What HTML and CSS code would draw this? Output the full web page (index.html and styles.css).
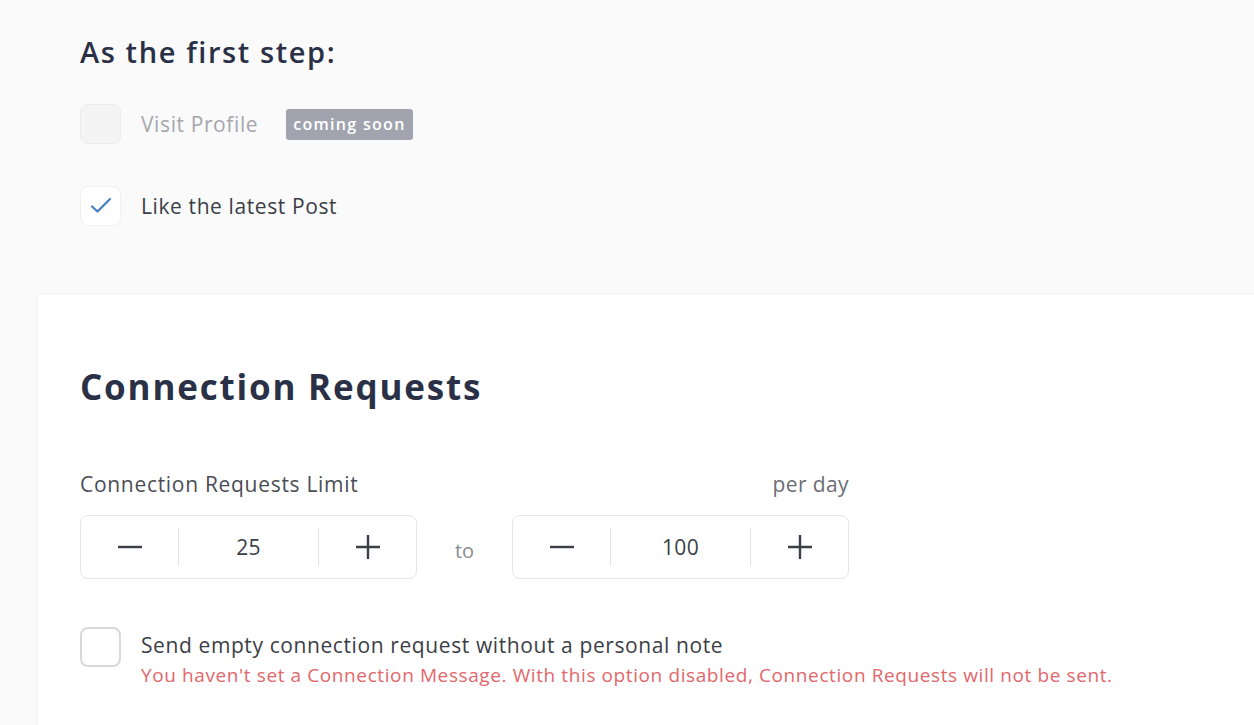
FILE: index.html
```html
<!DOCTYPE html>
<html lang="en">
<head>
    <meta charset="UTF-8">
    <meta name="viewport" content="width=device-width, initial-scale=1.0">
    <title>Campaign Steps</title>
    <link rel="stylesheet" href="styles.css">
</head>
<body>
    <div class="first-step">
        <h2>As the first step:</h2>

        <div class="option disabled">
            <span class="box"></span>
            <span class="label">Visit Profile</span>
            <span class="badge">coming soon</span>
        </div>

        <div class="option">
            <span class="box checked">
                <svg width="24" height="24" viewBox="0 0 24 24"><path d="M3 12.5l5.5 5L21 5" fill="none" stroke="#4a7fc3" stroke-width="2.3" stroke-linecap="round" stroke-linejoin="round"/></svg>
            </span>
            <span class="label">Like the latest Post</span>
        </div>
    </div>

    <div class="card">
        <h1>Connection Requests</h1>

        <div class="limit-head">
            <span>Connection Requests Limit</span>
            <span class="per-day">per day</span>
        </div>

        <div class="limit-row">
            <div class="stepper">
                <button class="step-btn">
                    <svg width="26" height="26" viewBox="0 0 26 26"><path d="M1 13h24" stroke="#3b3e46" stroke-width="2.4"/></svg>
                </button>
                <span class="value">25</span>
                <button class="step-btn">
                    <svg width="26" height="26" viewBox="0 0 26 26"><path d="M1 13h24M13 1v24" stroke="#3b3e46" stroke-width="2.4"/></svg>
                </button>
            </div>
            <span class="to">to</span>
            <div class="stepper">
                <button class="step-btn">
                    <svg width="26" height="26" viewBox="0 0 26 26"><path d="M1 13h24" stroke="#3b3e46" stroke-width="2.4"/></svg>
                </button>
                <span class="value">100</span>
                <button class="step-btn">
                    <svg width="26" height="26" viewBox="0 0 26 26"><path d="M1 13h24M13 1v24" stroke="#3b3e46" stroke-width="2.4"/></svg>
                </button>
            </div>
        </div>

        <div class="option empty-note">
            <span class="box outline"></span>
            <div class="note-text">
                <div class="label">Send empty connection request without a personal note</div>
                <div class="warning">You haven't set a Connection Message. With this option disabled, Connection Requests will not be sent.</div>
            </div>
        </div>
    </div>
</body>
</html>
```

FILE: styles.css
```css
body { margin: 0; background-color: #fafafb; font-family: "Open Sans", Arial, sans-serif; color: #3b3e46; }
h1, h2 { margin: 0; color: #2a3046; }

.first-step { padding: 32px 0 0 80px; height: 295px; box-sizing: border-box; }
.first-step h2 { font-size: 29px; font-weight: 600; line-height: 40px; letter-spacing: 1.6px; margin-bottom: 32px; }

.option { display: flex; align-items: center; gap: 20px; margin-bottom: 42px; }
.box { width: 41px; height: 40px; box-sizing: border-box; border-radius: 8px; border: 1px solid #ececee; background-color: #f4f4f5; display: flex; align-items: center; justify-content: center; flex-shrink: 0; }
.box.checked { background-color: #fff; border-color: #f0f0f2; }
.box.outline { background-color: #fff; border: 2px solid #d9d9dc; }
.label { font-size: 21px; line-height: 28px; letter-spacing: 0.6px; color: #3b3e46; }
.disabled .label { color: #a5a7ad; }
.badge { margin-left: 8px; background-color: #a1a4ae; color: #fff; font-size: 16px; font-weight: 600; letter-spacing: 1.3px; padding: 4px 7px; border-radius: 3px; line-height: 23px; }

.card { margin-left: 38px; background-color: #fff; box-shadow: 0 0 6px rgba(0, 0, 0, 0.04); padding: 68px 0 30px 42px; min-height: 430px; box-sizing: border-box; }
.card h1 { font-size: 35px; font-weight: 700; line-height: 48px; letter-spacing: 1.8px; margin-bottom: 59px; }
.card .option { margin-bottom: 0; }

.limit-head { width: 769px; display: flex; justify-content: space-between; font-size: 21px; line-height: 28px; letter-spacing: 0.7px; color: #4a4d55; }
.limit-head .per-day { color: #6b6e75; letter-spacing: 0.4px; }

.limit-row { display: flex; align-items: center; margin-top: 17px; }
.stepper { width: 337px; height: 64px; box-sizing: border-box; border: 1px solid #e6e6e8; border-radius: 8px; display: grid; grid-template-columns: 98px 1fr 98px; align-items: center; }
.step-btn { border: none; background: none; height: 38px; display: flex; align-items: center; justify-content: center; padding: 0; }
.step-btn:first-child { border-right: 1px solid #e3e3e5; }
.step-btn:last-child { border-left: 1px solid #e3e3e5; }
.value { text-align: center; font-size: 21px; letter-spacing: 0.3px; color: #3b3e46; }
.to { width: 95px; text-align: center; font-size: 20px; color: #8a8c92; padding-top: 6px; }

.empty-note { margin-top: 48px; align-items: flex-start; }
.note-text { padding-top: 4px; }
.warning { font-size: 19px; line-height: 24px; letter-spacing: 0.6px; color: #e2676b; margin-top: 4px; }
```
